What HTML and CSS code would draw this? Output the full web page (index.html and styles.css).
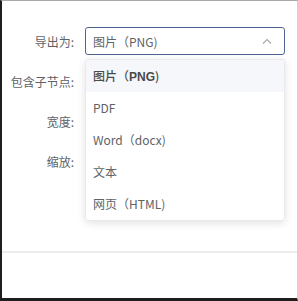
FILE: index.html
```html
<!DOCTYPE html>
<html lang="zh">
<head>
<meta charset="utf-8">
<link rel="stylesheet" href="styles.css">
</head>
<body>
<div class="frame">
  <div class="form">
    <div class="row">
      <div class="label">导出为:</div>
      <div class="select">
        <span class="value">图片（PNG)</span>
        <svg class="arrow" width="10" height="6" viewBox="0 0 10 6"><path d="M1 5.5 L5 1.5 L9 5.5" fill="none" stroke="#a8abb2" stroke-width="1.2"/></svg>
      </div>
    </div>
    <div class="row"><div class="label">包含子节点:</div></div>
    <div class="row"><div class="label">宽度:</div></div>
    <div class="row"><div class="label">缩放:</div></div>
  </div>
  <div class="footer"></div>
  <ul class="dropdown">
    <li class="item selected">图片（<b>PNG</b>)</li>
    <li class="item">PDF</li>
    <li class="item">Word（docx)</li>
    <li class="item">文本</li>
    <li class="item">网页（HTML)</li>
  </ul>
</div>
</body>
</html>
```
FILE: styles.css
```css
html, body {
  margin: 0;
  padding: 0;
  background: #fff;
}
body {
  font-family: "Noto Sans CJK SC", "Liberation Sans", sans-serif;
  font-size: 12px;
  color: #606266;
}
.frame {
  position: relative;
  width: 298px;
  height: 301px;
  box-sizing: border-box;
  border-left: 2px solid #1e1e1e;
  border-top: 1px solid #a9a9a9;
  border-right: 1px solid #d0d0d0;
  border-bottom: 3px solid #1e1e1e;
  display: flex;
  flex-direction: column;
}
.form {
  padding-top: 26px;
  display: flex;
  flex-direction: column;
  gap: 12px;
  height: 250px;
  box-sizing: border-box;
}
.row {
  display: flex;
  align-items: center;
  height: 28px;
  gap: 11px;
}
.label {
  width: 72px;
  text-align: right;
  flex: none;
}
.select {
  width: 200px;
  height: 28px;
  box-sizing: border-box;
  border: 1px solid #4d6596;
  border-radius: 3px;
  display: flex;
  align-items: center;
  justify-content: space-between;
  padding: 0 12px 0 7px;
}
.arrow {
  display: block;
}
.footer {
  border-top: 2px solid #ededed;
}
.dropdown {
  position: absolute;
  left: 83px;
  top: 58px;
  width: 200px;
  margin: 0;
  padding: 0;
  list-style: none;
  background: #fff;
  border: 1px solid #eaeaea;
  border-radius: 3px;
  box-shadow: 0 2px 8px rgba(0, 0, 0, 0.12);
  box-sizing: border-box;
}
.item {
  height: 32px;
  line-height: 32px;
  padding-left: 7px;
  white-space: nowrap;
}
.item.selected {
  background: #f5f7fa;
  color: #4a4a4a;
  font-weight: 500;
}
.item b {
  font-family: "Liberation Sans", sans-serif;
  font-weight: bold;
}
```
